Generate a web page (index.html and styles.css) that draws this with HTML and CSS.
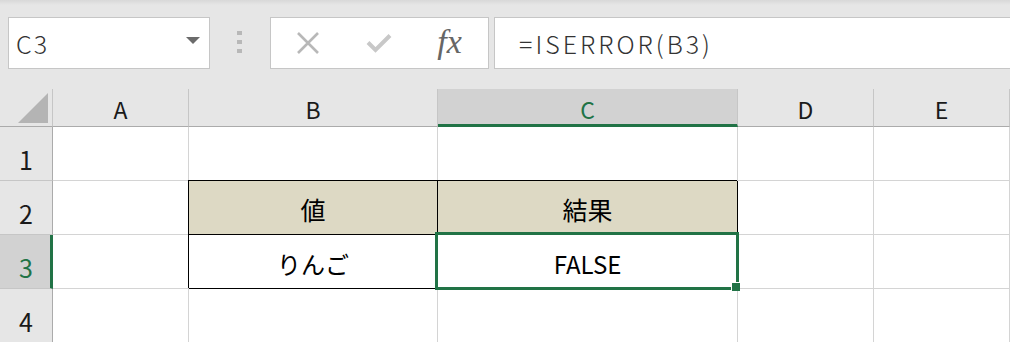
FILE: index.html
```html
<!DOCTYPE html>
<html lang="ja">
<head>
  <meta charset="UTF-8" />
  <title>ISERROR</title>
  <link rel="stylesheet" href="styles.css">
</head>
<body>
  <div class="ribbon">
    <div class="namebox"><span>C3</span><span class="caret"></span></div>
    <div class="grip"><i></i><i></i><i></i></div>
    <div class="fxbox">
      <span class="slot">
        <svg width="22" height="22" viewBox="0 0 22 22"><path d="M1 1L21 21M21 1L1 21" stroke="#b8b8b8" stroke-width="2.6" fill="none"/></svg>
      </span>
      <span class="slot">
        <svg width="26" height="20" viewBox="0 0 26 20"><path d="M2 9.5L9.5 17L24 2.5" stroke="#c8c8c8" stroke-width="4" fill="none"/></svg>
      </span>
      <span class="slot fx">fx</span>
    </div>
    <div class="formula">=ISERROR(B3)</div>
  </div>

  <div class="sheet">
    <div class="corner"><svg width="52" height="37"><polygon points="48,4 48,34 18,34" fill="#b4b4b4"/></svg></div>
    <div class="hd">A</div>
    <div class="hd">B</div>
    <div class="hd on">C</div>
    <div class="hd">D</div>
    <div class="hd">E</div>

    <div class="rh">1</div>
    <div class="c"></div>
    <div class="c"></div>
    <div class="c"></div>
    <div class="c"></div>
    <div class="c"></div>

    <div class="rh">2</div>
    <div class="c"></div>
    <div class="c t th">値</div>
    <div class="c t th">結果</div>
    <div class="c"></div>
    <div class="c"></div>

    <div class="rh on">3</div>
    <div class="c"></div>
    <div class="c t">りんご</div>
    <div class="c t">FALSE<div class="sel"><span class="handle"></span></div></div>
    <div class="c"></div>
    <div class="c"></div>

    <div class="rh">4</div>
    <div class="c"></div>
    <div class="c"></div>
    <div class="c"></div>
    <div class="c"></div>
    <div class="c"></div>
  </div>
</body>
</html>
```

FILE: styles.css
```css
body {
  margin: 0;
  width: 1010px;
  height: 342px;
  overflow: hidden;
  background: #fff;
  font-family: "Noto Sans CJK JP", "Noto Sans", sans-serif;
  color: #000;
}
.ribbon {
  display: flex;
  align-items: flex-start;
  height: 89px;
  box-sizing: border-box;
  padding: 17px 0 0 8px;
  background: linear-gradient(#d8d8d8, #e6e6e6 5px);
}
.namebox {
  width: 202px;
  height: 52px;
  box-sizing: border-box;
  border: 1px solid #c6c6c6;
  background: #fff;
  display: flex;
  align-items: center;
  justify-content: space-between;
  padding: 0 9px 0 7px;
  font-size: 25px;
  font-weight: 300;
  letter-spacing: 2px;
  color: #333;
}
.caret {
  width: 0;
  height: 0;
  border-left: 7px solid transparent;
  border-right: 7px solid transparent;
  border-top: 7px solid #6b6b6b;
  margin-top: -5px;
}
.grip {
  display: flex;
  flex-direction: column;
  gap: 5px;
  margin: 14px 28px 0 27px;
}
.grip i {
  display: block;
  width: 5px;
  height: 4px;
  background: #b8b8b8;
}
.fxbox {
  width: 219px;
  height: 52px;
  box-sizing: border-box;
  border: 1px solid #c6c6c6;
  background: #fff;
  display: flex;
  align-items: center;
  padding: 0 1px;
}
.slot {
  width: 71px;
  display: flex;
  justify-content: center;
}
.fx {
  font-family: "Liberation Serif", serif;
  font-style: italic;
  font-size: 34px;
  color: #666;
  margin-top: -2px;
}
.formula {
  flex: 1;
  height: 52px;
  box-sizing: border-box;
  margin: 0 -10px 0 5px;
  border: 1px solid #c6c6c6;
  background: #fff;
  padding-left: 24px;
  display: flex;
  align-items: center;
  font-size: 25px;
  font-weight: 300;
  letter-spacing: 3px;
  color: #333;
}
.sheet {
  display: grid;
  grid-template-columns: 53px 136px 249px 300px 136px 136px;
  grid-template-rows: 38px repeat(4, 54px);
}
.sheet > div {
  box-sizing: border-box;
}
.corner {
  background: #e6e6e6;
  border-right: 1px solid #c6c6c6;
  border-bottom: 1px solid #ababab;
}
.corner svg {
  display: block;
}
.hd {
  background: #e6e6e6;
  border-right: 1px solid #c6c6c6;
  border-bottom: 1px solid #ababab;
  display: flex;
  justify-content: center;
  align-items: center;
  padding-top: 3px;
  font-size: 23px;
  color: #1a1a1a;
}
.hd.on {
  background: #d2d2d2;
  border-bottom: 3px solid #217346;
  color: #217346;
  padding-top: 5px;
}
.rh {
  background: #e6e6e6;
  border-right: 1px solid #ababab;
  border-bottom: 1px solid #c6c6c6;
  display: flex;
  justify-content: center;
  align-items: flex-end;
  padding-bottom: 3px;
  font-size: 25px;
  color: #1a1a1a;
}
.rh.on {
  background: #d2d2d2;
  border-right: 3px solid #217346;
  color: #217346;
  padding-left: 2px;
}
.c {
  border-right: 1px solid #d4d4d4;
  border-bottom: 1px solid #d4d4d4;
  display: flex;
  justify-content: center;
  align-items: center;
  padding-top: 3px;
  font-size: 24px;
}
.c.t {
  position: relative;
  border-color: #000;
  box-shadow: -1px -1px 0 #000;
}
.c.th {
  background: #ddd9c4;
  font-size: 25px;
}
.sel {
  position: absolute;
  left: -3px;
  top: -3px;
  right: -2px;
  bottom: -2px;
  border: 3px solid #217346;
  z-index: 2;
}
.handle {
  position: absolute;
  right: -4px;
  bottom: -4px;
  width: 8px;
  height: 8px;
  background: #217346;
  box-shadow: -1px -1px 0 #fff;
}
```
